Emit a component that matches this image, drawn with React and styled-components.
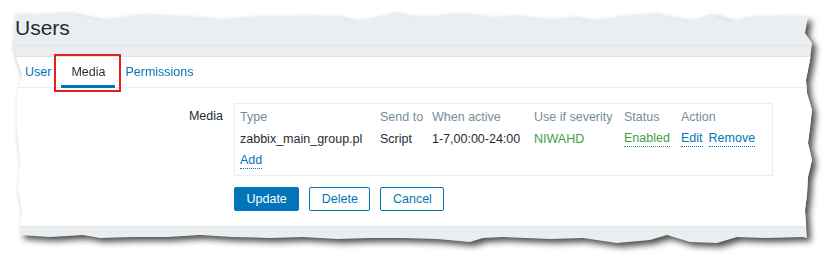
import React from 'react';
import styled, { createGlobalStyle } from 'styled-components';

const GlobalStyle = createGlobalStyle`
  html, body {
    margin: 0;
    padding: 0;
    background: #fff;
  }
  body {
    font-family: "Liberation Sans", Arial, sans-serif;
    font-size: 12.5px;
    color: #1f2c33;
  }
`;

// torn paper outline, page coordinates
const ORIGIN = [12, 11];
const EDGE = [
  [15, 14], [33, 15], [67, 13], [100, 20], [140, 15], [187, 17], [217, 20], [253, 17],
  [280, 17], [303, 16], [337, 17], [353, 21], [370, 19], [392, 13], [410, 17], [430, 17],
  [450, 14], [470, 15], [490, 18], [510, 16], [530, 18], [550, 20], [570, 17], [590, 21],
  [617, 17], [650, 14], [690, 21], [710, 14], [730, 21], [750, 17], [783, 16], [808, 17],
  [805, 33], [812, 43], [810, 60], [806, 80], [807, 93], [812, 110], [810, 128], [808, 143],
  [812, 160], [808, 177], [807, 195], [805, 210], [806, 225], [807, 238],
  [803, 237], [767, 238], [737, 237], [717, 243], [690, 242], [667, 235], [650, 240],
  [617, 243], [583, 238], [550, 239], [503, 237], [483, 238], [470, 242], [437, 239],
  [403, 238], [370, 238], [337, 239], [303, 237], [270, 238], [233, 237], [200, 235],
  [167, 237], [133, 237], [100, 238], [83, 235], [50, 237], [20, 235],
  [22, 212], [18, 188], [20, 162], [17, 128], [17, 94], [22, 75], [17, 60], [13, 43],
];
const clip = `polygon(${EDGE.map(([x, y]) => `${x - ORIGIN[0]}px ${y - ORIGIN[1]}px`).join(', ')})`;

const Shadow = styled.div`
  width: 835px;
  height: 265px;
  box-sizing: border-box;
  padding: 11px 0 0 12px;
  filter: drop-shadow(4px 4px 3px rgba(0, 0, 0, 0.7));
`;

const Paper = styled.div`
  width: 802px;
  height: 234px;
  background: #ebeef0;
  clip-path: ${clip};
  display: flex;
  flex-direction: column;
`;

const Header = styled.header`
  height: 35px;
  box-sizing: border-box;
  padding: 6px 0 0 3px;
  border-bottom: 1px solid #dfe4e7;
`;

const Title = styled.h1`
  margin: 0;
  font-size: 21px;
  line-height: 21px;
  font-weight: normal;
  color: #1f2c33;
`;

const Band = styled.div`
  height: 11px;
  box-sizing: border-box;
  border-bottom: 1px solid #dfe4e7;
`;

const TabBar = styled.nav`
  display: flex;
  height: 31px;
  box-sizing: border-box;
  padding-left: 3px;
  background: #fff;
  border-bottom: 1px solid #ebeef0;
`;

const Tab = styled.span`
  position: relative;
  display: flex;
  align-items: center;
  padding: 0 10px;
  color: ${p => (p.$active ? '#1f2c33' : '#0275b8')};

  &::after {
    content: '';
    display: ${p => (p.$active ? 'block' : 'none')};
    position: absolute;
    left: 0;
    right: 0;
    bottom: -1px;
    height: 3px;
    background: #0275b8;
  }
`;

const Highlight = styled.span`
  position: absolute;
  top: -3px;
  left: -7px;
  right: -6px;
  bottom: -5px;
  border: 2px solid #e3201c;
  pointer-events: none;
`;

const Form = styled.section`
  background: #fff;
  padding: 15px 0 15px;
  border-bottom: 1px solid #dfe4e7;
  display: grid;
  grid-template-columns: 211px 1fr;
  column-gap: 11px;
  row-gap: 11px;
`;

const Label = styled.div`
  text-align: right;
  padding-top: 6px;
  line-height: 14px;
  color: #1f2c33;
`;

const MediaBox = styled.div`
  width: 539px;
  box-sizing: border-box;
  border: 1px solid #ebeef0;
  padding: 3px 5px 3px;
  display: grid;
  grid-template-columns: 140px 52px 102px 90px 57px 1fr;
  grid-auto-rows: 21.5px;
  line-height: 21px;
  white-space: nowrap;
`;

const Head = styled.div`
  color: #768d99;
`;

const Cell = styled.div`
  display: flex;
  gap: 6px;
  color: ${p => p.$color || '#1f2c33'};
`;

const Link = styled.span`
  line-height: 14px;
  align-self: center;
  padding-bottom: 1px;
  color: ${p => p.$color || '#0275b8'};
  border-bottom: 1px dotted ${p => p.$color || '#0275b8'};
`;

const Buttons = styled.div`
  grid-column: 2;
  display: flex;
  gap: 10px;
`;

const Button = styled.button`
  height: 24px;
  padding: 0 11.5px;
  border: 1px solid #0275b8;
  border-radius: 2px;
  font-family: inherit;
  font-size: 12.5px;
  background: ${p => (p.$primary ? '#0275b8' : '#fff')};
  color: ${p => (p.$primary ? '#fff' : '#0275b8')};
`;

const Footer = styled.div`
  flex: 1;
`;

export default function App() {
  return (
    <>
      <GlobalStyle />
      <Shadow>
        <Paper>
          <Header>
            <Title>Users</Title>
          </Header>
          <Band />
          <TabBar>
            <Tab>User</Tab>
            <Tab $active>
              Media
              <Highlight />
            </Tab>
            <Tab>Permissions</Tab>
          </TabBar>
          <Form>
            <Label>Media</Label>
            <MediaBox>
              <Head>Type</Head>
              <Head>Send to</Head>
              <Head>When active</Head>
              <Head>Use if severity</Head>
              <Head>Status</Head>
              <Head>Action</Head>

              <Cell>zabbix_main_group.pl</Cell>
              <Cell>Script</Cell>
              <Cell>1-7,00:00-24:00</Cell>
              <Cell $color="#429e47">NIWAHD</Cell>
              <Cell><Link $color="#429e47">Enabled</Link></Cell>
              <Cell><Link>Edit</Link><Link>Remove</Link></Cell>

              <Cell><Link>Add</Link></Cell>
            </MediaBox>
            <Buttons>
              <Button $primary>Update</Button>
              <Button>Delete</Button>
              <Button>Cancel</Button>
            </Buttons>
          </Form>
          <Footer />
        </Paper>
      </Shadow>
    </>
  );
}
